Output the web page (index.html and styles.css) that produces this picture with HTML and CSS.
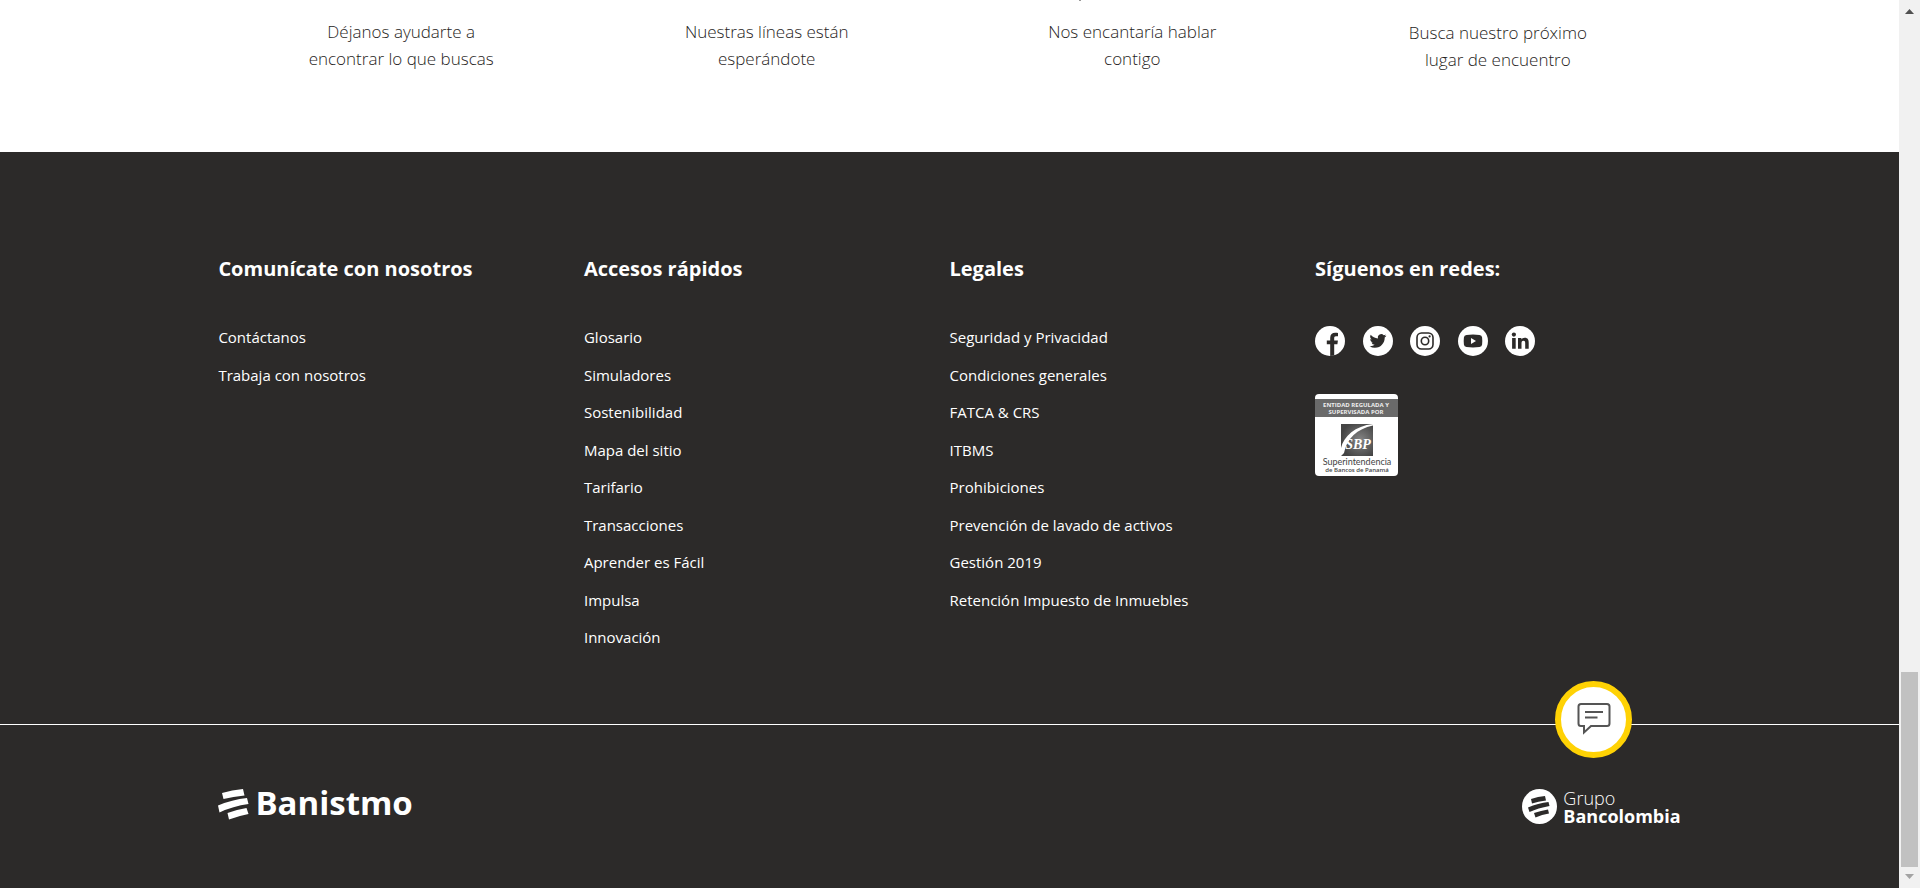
FILE: index.html
```html
<!DOCTYPE html>
<html lang="es">
<head>
<meta charset="utf-8">
<title>Banistmo</title>
<meta name="viewport" content="width=device-width, initial-scale=1">
<link rel="stylesheet" href="styles.css">
</head>
<body>
<div class="page">
  <main class="contact">
    <p class="contact-item">Déjanos ayudarte a<br>encontrar lo que buscas</p>
    <p class="contact-item">Nuestras líneas están<br>esperándote</p>
    <p class="contact-item contact-item-tail">Nos encantaría hablar<br>contigo</p>
    <p class="contact-item contact-item-low">Busca nuestro próximo<br>lugar de encuentro</p>
  </main>

  <footer class="footer">
    <div class="footer-columns">
      <section class="column">
        <h2 class="column-title">Comunícate con nosotros</h2>
        <ul class="links">
          <li><a href="#">Contáctanos</a></li>
          <li><a href="#">Trabaja con nosotros</a></li>
        </ul>
      </section>
      <section class="column">
        <h2 class="column-title">Accesos rápidos</h2>
        <ul class="links">
          <li><a href="#">Glosario</a></li>
          <li><a href="#">Simuladores</a></li>
          <li><a href="#">Sostenibilidad</a></li>
          <li><a href="#">Mapa del sitio</a></li>
          <li><a href="#">Tarifario</a></li>
          <li><a href="#">Transacciones</a></li>
          <li><a href="#">Aprender es Fácil</a></li>
          <li><a href="#">Impulsa</a></li>
          <li><a href="#">Innovación</a></li>
        </ul>
      </section>
      <section class="column">
        <h2 class="column-title">Legales</h2>
        <ul class="links">
          <li><a href="#">Seguridad y Privacidad</a></li>
          <li><a href="#">Condiciones generales</a></li>
          <li><a href="#">FATCA &amp; CRS</a></li>
          <li><a href="#">ITBMS</a></li>
          <li><a href="#">Prohibiciones</a></li>
          <li><a href="#">Prevención de lavado de activos</a></li>
          <li><a href="#">Gestión 2019</a></li>
          <li><a href="#">Retención Impuesto de Inmuebles</a></li>
        </ul>
      </section>
      <section class="column">
        <h2 class="column-title">Síguenos en redes:</h2>
        <div class="social">
          <a href="#" aria-label="Facebook"><svg viewBox="0 0 30 30"><circle cx="15" cy="15" r="15" fill="#fff"/><path d="M15.2 30V18.2H11.8V14.6H15.2V11.8C15.2 8.500 17.200 6.800 20.200 6.800C21.500 6.800 22.500 6.900 23 7V10.300H21C19.500 10.300 19.200 11.100 19.200 12.200V14.600H22.900L22.400 18.200H19.200V29.400Z" fill="#2c2a29"/></svg></a>
          <a href="#" aria-label="Twitter"><svg viewBox="0 0 30 30"><circle cx="15" cy="15" r="15" fill="#fff"/><path transform="translate(6.600 6.600) scale(.7)" d="M23.950 4.570a10 10 0 0 1-2.820.770 4.960 4.960 0 0 0 2.160-2.720c-.95.550-2 .95-3.120 1.180a4.920 4.920 0 0 0-8.390 4.480C7.690 8.090 4.070 6.130 1.640 3.160a4.920 4.920 0 0 0 1.520 6.570 4.900 4.900 0 0 1-2.230-.61v.06a4.920 4.920 0 0 0 3.950 4.820 5 5 0 0 1-2.210.09 4.940 4.940 0 0 0 4.600 3.420A9.870 9.870 0 0 1 0 19.540a14 14 0 0 0 7.550 2.210c9.050 0 14-7.500 14-13.990 0-.21 0-.42-.02-.63a10 10 0 0 0 2.460-2.550z" fill="#2c2a29"/></svg></a>
          <a href="#" aria-label="Instagram"><svg viewBox="0 0 30 30"><circle cx="15" cy="15" r="15" fill="#fff"/><g fill="none" stroke="#2c2a29" stroke-width="1.600"><rect x="7" y="7" width="16" height="16" rx="4.500"/><circle cx="15" cy="15" r="3.700"/></g><circle cx="19.600" cy="10.400" r="1.100" fill="#2c2a29"/></svg></a>
          <a href="#" aria-label="YouTube"><svg viewBox="0 0 30 30"><circle cx="15" cy="15" r="15" fill="#fff"/><path d="M8.500 8.900Q15 8.200 21.500 8.900Q23.900 9.200 24.100 11.500Q24.500 15 24.100 18.500Q23.900 20.800 21.500 21.100Q15 21.800 8.500 21.100Q6.100 20.800 5.900 18.500Q5.500 15 5.900 11.500Q6.100 9.200 8.500 8.900Z" fill="#2c2a29"/><path d="M13 12L18 15L13 18Z" fill="#fff"/></svg></a>
          <a href="#" aria-label="LinkedIn"><svg viewBox="0 0 30 30"><circle cx="15" cy="15" r="15" fill="#fff"/><g fill="#2c2a29"><circle cx="8.900" cy="8.600" r="2.100"/><path d="M7.100 12H10.700V22.800H7.100ZM13 12H16.400V13.500C17 12.500 18.100 11.700 19.700 11.700C23 11.700 23.700 13.900 23.700 16.800V22.800H20.200V17.400C20.200 16.100 20.100 14.700 18.400 14.700C16.800 14.700 16.500 16 16.500 17.300V22.800H13Z"/></g></svg></a>
        </div>
        <a class="seal" href="#">
          <svg viewBox="0 0 83 82" role="img" aria-label="Superintendencia de Bancos de Panamá">
            <defs><radialGradient id="shade" cx=".6" cy=".5" r=".6"><stop offset="0" stop-color="#858585"/><stop offset="1" stop-color="#444"/></radialGradient></defs>
            <rect width="83" height="82" rx="4" fill="#fff"/>
            <rect y="5" width="83" height="18" fill="#6a6a6a"/>
            <g class="seal-band"><text x="41" y="13">ENTIDAD REGULADA Y</text><text x="41" y="20">SUPERVISADA POR</text></g>
            <rect x="26" y="30" width="32" height="32" fill="url(#shade)"/>
            <path d="M26 54C29 42 40 32 58 30V31.500C42 35 32 44 29 59L26 62Z" fill="#fff"/>
            <text class="seal-mark" x="43" y="55">SBP</text>
            <text class="seal-name" x="42" y="71">Superintendencia</text>
            <text class="seal-sub" x="42" y="78">de Bancos de Panamá</text>
          </svg>
        </a>
      </section>
    </div>

    <div class="brand-bar">
      <a class="banistmo" href="#">
        <svg viewBox="0 0 31 31" aria-hidden="true"><g fill="#fff"><path d="M4 4Q14 1 25 0L26.500 6.500Q15 7.500 5.500 10Z"/><path d="M0 16.500Q14 10.500 29 9L30.500 15Q15 17 1.500 23.500Z"/><path d="M9.500 24Q19 20.500 28.500 19L30.500 25Q20 27 11 30.500Z"/></g></svg>
        <span>Banistmo</span>
      </a>
      <a class="grupo" href="#">
        <svg viewBox="0 0 35 35" aria-hidden="true"><circle cx="17.500" cy="17.500" r="17.500" fill="#fff"/><g fill="#2c2a29"><path d="M9 10Q16 7.300 23 7L24 11.500Q16 12.300 10 14.500Z"/><path d="M6 18.500Q16 14 26.500 13L27.500 17Q16 19 7.500 23Z"/><path d="M12 24Q19 21.500 26 20.500L27 24.500Q20 25.500 13.500 28.500Z"/></g></svg>
        <span class="grupo-text"><span>Grupo</span><strong>Bancolombia</strong></span>
      </a>
      <button class="chat" type="button" aria-label="Abrir chat">
        <svg viewBox="0 0 34 32" aria-hidden="true"><g fill="none" stroke="#555" stroke-width="2"><path d="M4 1H30Q32.500 1 32.500 3.500V20.500Q32.500 23 30 23H14L7 29.500V23H4Q1.500 23 1.500 20.500V3.500Q1.500 1 4 1Z"/><path d="M8 9H26M8 14.500H20.500"/></g></svg>
      </button>
    </div>
  </footer>
</div>

<div class="scrollbar" aria-hidden="true">
  <svg class="arrow arrow-up" viewBox="0 0 9 5"><path d="M0 5L4.500 0L9 5Z"/></svg>
  <div class="thumb"></div>
  <svg class="arrow arrow-down" viewBox="0 0 9 5"><path d="M0 0H9L4.500 5Z"/></svg>
</div>
</body>
</html>
```
FILE: styles.css
```css
* { box-sizing: border-box; }

body {
  margin: 0;
  min-height: 100vh;
  display: flex;
  background: #2c2a29;
  font-family: "Open Sans", "Noto Sans", sans-serif;
}

a { color: inherit; text-decoration: none; }

.page {
  flex: 1;
  min-width: 0;
  display: flex;
  flex-direction: column;
}

.contact {
  display: grid;
  grid-template-columns: repeat(4, 1fr);
  padding: 18px 11.5% 80px;
  background: #fff;
  color: #1f1d1c;
}

.contact-item {
  position: relative;
  margin: 0;
  font-size: 17px;
  font-weight: 300;
  line-height: 27px;
  text-align: center;
}

.contact-item-low { padding-top: 1px; margin-bottom: -1px; }

/* Descender of the card title above the fold */
.contact-item-tail::before {
  content: "";
  position: absolute;
  top: -18px;
  left: 129px;
  width: 2px;
  height: 1px;
  background: #999;
}

.footer {
  flex: 1;
  background: #2c2a29;
  color: #fff;
}

.footer-columns {
  display: grid;
  grid-template-columns: repeat(4, 1fr);
  padding: 102px 11.5% 75px;
}

.column-title {
  margin: 0 0 42px;
  font-size: 20px;
  font-weight: 700;
  line-height: 30px;
}

.links {
  margin: 0;
  padding: 0;
  list-style: none;
  display: grid;
  gap: 15px;
  font-size: 15px;
  line-height: 1.5;
}

.social {
  display: flex;
  justify-content: space-between;
  width: 220px;
  margin-bottom: 38px;
}

.social svg { display: block; width: 30px; height: 30px; }

.seal { display: block; width: 83px; }
.seal svg { display: block; width: 100%; }
.seal text { text-anchor: middle; }
.seal-band { fill: #eee; font-size: 6px; font-weight: 700; }
.seal-mark { fill: #fff; font: italic 700 14px "Liberation Serif", serif; }
.seal-name { fill: #444; font-family: Lato, sans-serif; font-size: 9px; }
.seal-sub { fill: #444; font-size: 6px; font-weight: 600; }

.brand-bar {
  position: relative;
  display: flex;
  justify-content: space-between;
  align-items: flex-start;
  padding: 64px 11.5% 60px;
  border-top: 1px solid #fff;
}

.banistmo {
  display: flex;
  align-items: flex-start;
  gap: 6px;
  font-size: 33px;
  font-weight: 700;
  line-height: 27px;
}

.banistmo svg { width: 31px; height: 31px; }

.grupo { display: flex; align-items: flex-start; gap: 6px; }
.grupo > svg { width: 35px; height: 35px; }
.grupo-text { display: grid; font-size: 18px; line-height: 18px; font-weight: 300; }
.grupo-text strong { font-weight: 700; }

.chat {
  position: absolute;
  top: -44px;
  right: 267px;
  width: 77px;
  height: 77px;
  padding: 0;
  display: grid;
  place-items: center;
  border: 6px solid #ffd204;
  border-radius: 50%;
  background: #fff;
}

.chat svg { width: 34px; height: 32px; }

.scrollbar {
  width: 21px;
  padding: 9px 2px;
  display: flex;
  flex-direction: column;
  align-items: center;
  background: #f1f1f1;
}

.arrow { width: 9px; height: 5px; }
.arrow-up { fill: #505050; }
.arrow-down { fill: #a3a3a3; }

.thumb {
  width: 17px;
  height: 22vh;
  margin-top: auto;
  margin-bottom: 7px;
  background: #c1c1c1;
}
```
